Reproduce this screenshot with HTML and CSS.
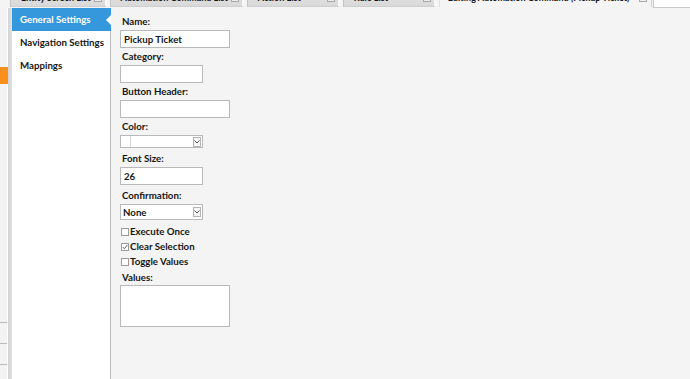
FILE: index.html
```html
<!DOCTYPE html>
<html>
<head>
<meta charset="utf-8">
<link rel="stylesheet" href="styles.css">
</head>
<body>
<div class="app">
  <div class="tabs">
    <div class="tab"><span class="tab-label">Entity Screen List</span><span class="tab-close"></span></div>
    <div class="tab"><span class="tab-label">Automation Command List</span><span class="tab-close"></span></div>
    <div class="tab"><span class="tab-label">Action List</span><span class="tab-close"></span></div>
    <div class="tab"><span class="tab-label">Rule List</span><span class="tab-close"></span></div>
    <div class="tab tab-active"><span class="tab-label">Editing Automation Command (Pickup Ticket)</span><span class="tab-close"></span></div>
    <div class="tab-search"></div>
  </div>
  <div class="body">
    <div class="strip">
      <div class="strip-orange"></div>
      <div class="strip-line first"></div>
      <div class="strip-line"></div>
      <div class="strip-line"></div>
    </div>
    <div class="gutter"></div>
    <nav class="nav">
      <div class="nav-item active">General Settings</div>
      <div class="nav-item">Navigation Settings</div>
      <div class="nav-item">Mappings</div>
    </nav>
    <div class="form">
      <div class="field">
        <div class="label">Name:</div>
        <div class="input wide">Pickup Ticket</div>
      </div>
      <div class="field">
        <div class="label">Category:</div>
        <div class="input narrow"></div>
      </div>
      <div class="field">
        <div class="label">Button Header:</div>
        <div class="input wide"></div>
      </div>
      <div class="field f-color">
        <div class="label">Color:</div>
        <div class="select color-select"><span class="swatch"></span><span class="arrow"><svg width="6" height="4" viewBox="0 0 6 4"><polyline points="0.5,0.5 3,3 5.5,0.5" fill="none" stroke="#555" stroke-width="1"/></svg></span></div>
      </div>
      <div class="field f-size">
        <div class="label">Font Size:</div>
        <div class="input narrow">26</div>
      </div>
      <div class="field">
        <div class="label">Confirmation:</div>
        <div class="select conf-select"><span class="select-text">None</span><span class="arrow"><svg width="6" height="4" viewBox="0 0 6 4"><polyline points="0.5,0.5 3,3 5.5,0.5" fill="none" stroke="#555" stroke-width="1"/></svg></span></div>
      </div>
      <div class="checks">
        <div class="check"><span class="box"></span>Execute Once</div>
        <div class="check"><span class="box"><svg width="6" height="6" viewBox="0 0 6 6"><polyline points="0.8,3 2.4,4.8 5.4,0.8" fill="none" stroke="#666" stroke-width="1"/></svg></span>Clear Selection</div>
        <div class="check"><span class="box"></span>Toggle Values</div>
      </div>
      <div class="field">
        <div class="label values-label">Values:</div>
        <div class="textarea"></div>
      </div>
    </div>
  </div>
</div>
</body>
</html>
```
FILE: styles.css
```css
* { box-sizing: border-box; }
html, body {
  margin: 0;
  padding: 0;
}
body {
  width: 690px;
  height: 379px;
  overflow: hidden;
  background: #f4f4f4;
  font-family: Lato, "Open Sans", sans-serif;
  font-weight: 700;
  font-size: 9.7px;
  color: #161616;
}
.app {
  display: flex;
  flex-direction: column;
  height: 379px;
}
.tabs {
  height: 8px;
  overflow: hidden;
  display: flex;
  padding-left: 10px;
  flex: none;
}
.tab {
  display: flex;
  align-items: center;
  height: 18px;
  margin-top: -11px;
  min-width: 93px;
  padding: 0 3px 0 10px;
  background: linear-gradient(#e4e4e4, #d9d9d9);
  border-left: 1px solid #c4c4c4;
  border-right: 2px solid #f8f8f8;
  border-bottom: 1px solid #cfcfcf;
  line-height: 18px;
  font-size: 9px;
  white-space: nowrap;
}
.tab + .tab { margin-left: 3px; }
.tab-label { margin-right: 3px; }
.tab-close {
  margin-left: auto;
  width: 8px;
  height: 8px;
  border: 1px solid #a8a8a8;
  background: #ececec;
}
.tab-active {
  background: #f4f4f4;
  border-bottom: none;
  border-left-color: #e0e0e0;
  border-right: 1px solid #d0d0d0;
  padding-left: 8px;
  padding-right: 4px;
  margin-left: 0;
  min-width: 213px;
}
.tab-active .tab-close { background: #f0f0f0; }
.tab-search {
  margin-left: 1px;
  flex: 1;
  height: 9px;
  margin-top: -1px;
  background: #fff;
  border: 1px solid #c9c9c9;
  border-right: none;
}
.body {
  flex: 1;
  display: flex;
  min-height: 0;
}
.strip {
  width: 8px;
  flex: none;
  display: flex;
  flex-direction: column;
  background: linear-gradient(to right, #f3f3f3 7px, #ffffff 7px);
}
.strip-orange {
  margin-top: 59px;
  height: 17px;
  background: #f7901e;
}
.strip-line {
  width: 7px;
  height: 1px;
  background: #b9b9b9;
  margin-top: 20px;
}
.strip-line.first { margin-top: 238px; }
.gutter {
  width: 4px;
  flex: none;
  background: linear-gradient(to right, #d2d2d2, #e2e2e2);
}
.nav {
  width: 99px;
  flex: none;
  background: #fff;
  border-right: 1px solid #bdbdbd;
}
.nav-item {
  position: relative;
  height: 23px;
  line-height: 23px;
  padding-left: 8px;
  white-space: nowrap;
  color: #161616;
}
.nav-item.active {
  background: #3598dc;
  color: #fff;
  margin-right: -1px;
}
.nav-item.active::after {
  content: "";
  position: absolute;
  right: 0;
  top: 7px;
  border-top: 5px solid transparent;
  border-bottom: 5px solid transparent;
  border-right: 5px solid #fff;
}
.form {
  flex: 1;
  padding: 7px 0 0 9px;
}
.field { margin-bottom: 2px; }
.f-color { margin-bottom: 4px; }
.f-size { margin-bottom: 4px; }
.label {
  line-height: 12px;
  height: 12px;
  padding-left: 2px;
  margin-bottom: 3px;
  white-space: nowrap;
}
.input {
  height: 18px;
  background: #fff;
  border: 1px solid #b9b9b9;
  line-height: 16px;
  padding-left: 3px;
}
.input.wide { width: 110px; }
.input.narrow { width: 83px; }
.select {
  width: 83px;
  background: #fff;
  border: 1px solid #b9b9b9;
  display: flex;
  align-items: center;
}
.color-select { height: 13px; }
.conf-select { height: 16px; padding-left: 2px; }
.select-text { line-height: 14px; }
.swatch {
  width: 10px;
  height: 11px;
  border-right: 1px solid #d4d4d4;
  background: #fff;
}
.arrow {
  margin-left: auto;
  margin-right: 1px;
  width: 8px;
  height: 10px;
  border: 1px solid #b4b4b4;
  background: #f6f6f6;
  display: flex;
  align-items: center;
  justify-content: center;
}
.checks {
  margin-top: 4px;
  margin-bottom: 2px;
}
.check {
  display: flex;
  align-items: center;
  height: 15px;
  line-height: 15px;
  white-space: nowrap;
}
.box {
  width: 8px;
  height: 8px;
  margin-left: 1px;
  margin-right: 1px;
  border: 1px solid #9a9a9a;
  background: #fff;
  display: flex;
  align-items: center;
  justify-content: center;
}
.values-label { margin-bottom: 2px; }
.textarea {
  width: 110px;
  height: 42px;
  background: #fff;
  border: 1px solid #b9b9b9;
}
```
